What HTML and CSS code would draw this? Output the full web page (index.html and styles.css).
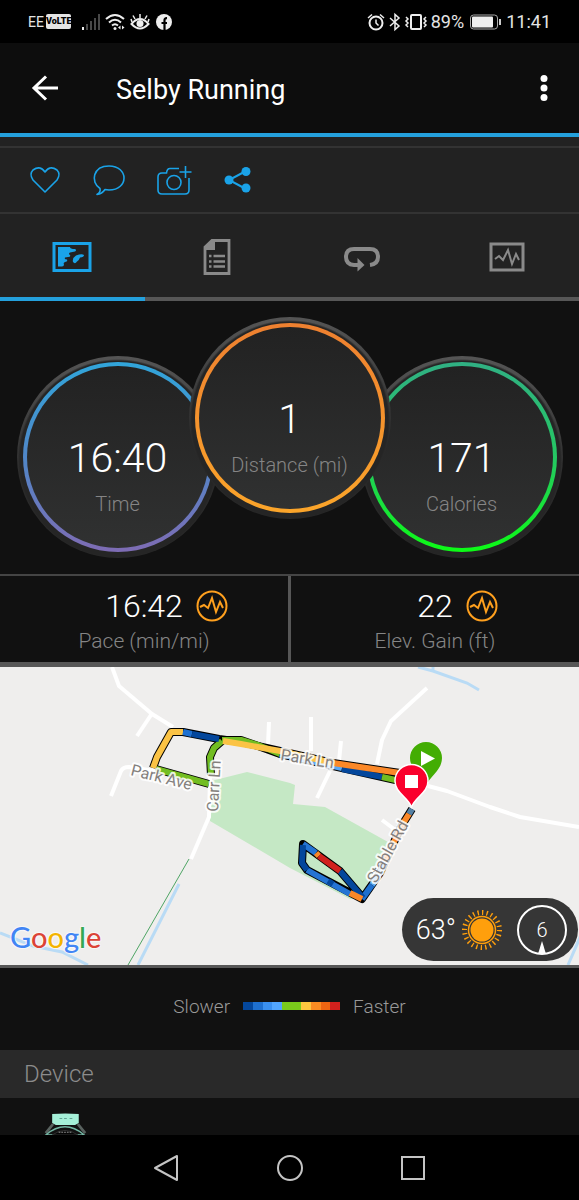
FILE: index.html
```html
<!DOCTYPE html>
<html lang="en">
<head>
    <meta charset="UTF-8">
    <meta name="viewport" content="width=device-width, initial-scale=1">
    <title>Selby Running</title>
    <link rel="stylesheet" href="styles.css">
</head>
<body>
    <div class="status-bar">
        <div class="status-left">
            <span class="carrier">EE</span>
            <span class="volte">VoLTE</span>
            <svg class="signal" width="18" height="18" viewBox="0 0 18 18">
                <path d="M1 14v3" stroke="#eee" stroke-width="2"/>
                <path d="M5 11v6M9 8v9M13 5v12M17 1v16" stroke="#484848" stroke-width="2"/>
            </svg>
            <svg width="20" height="18" viewBox="0 0 20 18" fill="none" stroke="#eee" stroke-width="2">
                <path d="M1 6Q10-2 19 6M4 9.500Q10 4 16 9.500M7 12.500Q10 10 13 12.500"/>
                <circle cx="10" cy="15.500" r="1.500" fill="#eee" stroke="none"/>
                <path d="M15.500 12.500v4l-2.500-2zM17 12.500v4l2.500-2z" fill="#eee" stroke="none"/>
            </svg>
            <svg width="20" height="18" viewBox="0 0 20 18" fill="none" stroke="#eee" stroke-width="2">
                <path d="M1.500 11Q10 1 18.500 11Q10 20 1.500 11z"/>
                <path d="M10 5V1M5 6L3 2.500M15 6l2-3.500M2 9L1 6M18 9l1-3" stroke-width="1.500"/>
                <circle cx="10" cy="10.500" r="3.500" fill="#eee" stroke="none"/>
            </svg>
            <svg width="18" height="18" viewBox="0 0 18 18">
                <circle cx="9" cy="9" r="8" fill="#eee"/>
                <path d="M9.500 17V7q0-2 2.500-1.800M6.500 10h5.500" fill="none" stroke="#000" stroke-width="2.200"/>
            </svg>
        </div>
        <div class="status-right">
            <svg width="18" height="18" viewBox="0 0 18 18" fill="none" stroke="#eee" stroke-width="2">
                <circle cx="9" cy="10" r="6.500"/>
                <path d="M9 6.500V10l2.500 2.500M1 5l4-3.500M17 5l-4-3.500" stroke-width="1.500"/>
            </svg>
            <svg width="12" height="18" viewBox="0 0 12 18" fill="none" stroke="#eee" stroke-width="1.500">
                <path d="M1 5l9 8-4 3.500V1.500L10 5l-9 8"/>
            </svg>
            <svg class="vibrate" width="22" height="18" viewBox="0 0 22 18" fill="none" stroke="#eee" stroke-width="2">
                <rect x="6" y="2" width="10" height="14" rx="1"/>
                <path d="M1 4l2 2-2 2 2 2-2 2 2 2M21 4l-2 2 2 2-2 2 2 2-2 2" stroke-width="1.500"/>
            </svg>
            <span class="battery-text">89%</span>
            <svg class="battery" width="31" height="16" viewBox="0 0 31 16">
                <rect x="0.500" y="1" width="27" height="14" rx="3" fill="none" stroke="#aaa"/>
                <rect x="2" y="2.500" width="21" height="11" rx="1" fill="#eee"/>
                <path d="M30 5v6" stroke="#ccc" stroke-width="2"/>
            </svg>
            <span class="clock">11:41</span>
        </div>
    </div>

    <header class="app-bar">
        <button class="icon-btn" aria-label="Back">
            <svg width="28" height="28" viewBox="0 0 28 28" fill="none" stroke="#fff" stroke-width="3">
                <path d="M27 14H3M15 2.500L3 14l12 11.500"/>
            </svg>
        </button>
        <h1 class="title">Selby Running</h1>
        <button class="icon-btn menu-btn" aria-label="More options">
            <svg width="8" height="28" viewBox="0 0 8 28" fill="#fff">
                <circle cx="4" cy="4.500" r="3.500"/><circle cx="4" cy="14" r="3.500"/><circle cx="4" cy="23.500" r="3.500"/>
            </svg>
        </button>
    </header>

    <div class="actions">
        <button class="icon-btn" aria-label="Like">
            <svg width="34" height="34" viewBox="0 0 34 34" fill="none" stroke="#1aa3e8" stroke-width="1.600">
                <path d="M17 29L5 17Q1 11 5 7Q12 2 17 9Q22 2 29 7Q33 11 29 17z" stroke-linejoin="round"/>
            </svg>
        </button>
        <button class="icon-btn" aria-label="Comment">
            <svg width="34" height="34" viewBox="0 0 34 34" fill="none" stroke="#1aa3e8" stroke-width="1.600">
                <path d="M8 25.500C-2 19 1 3 17 3C37 3 37 27 17 27L13 26.500Q10 31 5 31.500Q9 29 8 25.500z" stroke-linejoin="round"/>
            </svg>
        </button>
        <button class="icon-btn" aria-label="Add photo">
            <svg width="34" height="34" viewBox="0 0 34 34" fill="none" stroke="#1aa3e8" stroke-width="1.600">
                <path d="M23 5.500H14q-3 0-3.500 4.500H6q-4 0-4 4v13q0 4 4 4h23q4 0 4-4V15M29.500 3v12M23.500 9h12"/>
                <circle cx="18" cy="19.500" r="7"/>
            </svg>
        </button>
        <button class="icon-btn" aria-label="Share">
            <svg width="34" height="34" viewBox="0 0 34 34" fill="#1aa3e8">
                <path d="M26 8L9 17l17 9" fill="none" stroke="#1aa3e8" stroke-width="2"/>
                <circle cx="26" cy="8.500" r="4.500"/><circle cx="9" cy="17" r="4.500"/><circle cx="26" cy="25" r="4.500"/>
            </svg>
        </button>
    </div>

    <nav class="tabs">
        <button class="tab active" aria-label="Overview">
            <svg width="40" height="30" viewBox="0 0 40 30" fill="#1aa3e8">
                <rect x="2" y="1.500" width="36" height="27" fill="none" stroke="#1aa3e8" stroke-width="3"/>
                <path d="M6 5h12q0 2 5 2q2 1 0 2.500l-5 1q-2 1 0 2.500q1 2-2 2l-3 .5q-1 2 2 2q1 2-2 2.500q-2 1-1 2.500q0 2-2 2H6z"/>
                <path d="M21 20q-1-4 3-6.500q6-2 8-.5q0 2-4 2.500q-1 3-3 4q-2 3-4 .5z"/>
            </svg>
        </button>
        <button class="tab" aria-label="Stats">
            <svg width="28" height="38" viewBox="0 0 28 38" fill="#8a8a8a">
                <path d="M2 9V35.500H26V2.500H9L2 9z" fill="none" stroke="#8a8a8a" stroke-width="2.800"/>
                <path d="M2 12V9L9 2h3v10z"/>
                <path d="M6 18h2.500M10.500 18H22M6 23.500h2.500M10.500 23.500H22M6 28.500h2.500M10.500 28.500H22" stroke="#8a8a8a" stroke-width="2.500"/>
            </svg>
        </button>
        <button class="tab" aria-label="Laps">
            <svg width="38" height="28" viewBox="0 0 38 28">
                <path d="M15 22h-4Q3 21.500 3 14Q3 6 11 6h16Q35 6 35 14Q35 21 27 22" fill="none" stroke="#8a8a8a" stroke-width="4"/>
                <path d="M14.500 15l7 7-7 6.500z" fill="#8a8a8a"/>
            </svg>
        </button>
        <button class="tab" aria-label="Charts">
            <svg width="36" height="30" viewBox="0 0 36 30" fill="none" stroke="#8a8a8a">
                <rect x="2" y="2" width="32" height="26" stroke-width="3"/>
                <path d="M6 17l4-3 4 4 5-10 4 14 4-10 3 6" stroke-width="2"/>
            </svg>
        </button>
    </nav>

    <section class="dials">
        <div class="dial dial-time">
            <div class="ring">
                <div class="face">
                    <span class="dial-value">16:40</span>
                    <span class="label">Time</span>
                </div>
            </div>
        </div>
        <div class="dial dial-distance">
            <div class="ring">
                <div class="face">
                    <span class="dial-value">1</span>
                    <span class="label">Distance (mi)</span>
                </div>
            </div>
        </div>
        <div class="dial dial-calories">
            <div class="ring">
                <div class="face">
                    <span class="dial-value">171</span>
                    <span class="label">Calories</span>
                </div>
            </div>
        </div>
    </section>

    <section class="stats">
        <div class="stat">
            <div class="stat-row">
                <span class="stat-value">16:42</span>
                <svg class="stat-icon" width="32" height="32" viewBox="0 0 32 32" fill="none" stroke="#ffa01e" stroke-width="2">
                    <circle cx="16" cy="16" r="14.500"/>
                    <path d="M4 17l4-2 4 3 4-10 4 14 4-10 3 6"/>
                </svg>
            </div>
            <span class="label">Pace (min/mi)</span>
        </div>
        <div class="stat">
            <div class="stat-row">
                <span class="stat-value">22</span>
                <svg class="stat-icon" width="32" height="32" viewBox="0 0 32 32" fill="none" stroke="#ffa01e" stroke-width="2">
                    <circle cx="16" cy="16" r="14.500"/>
                    <path d="M4 17l4-2 4 3 4-10 4 14 4-10 3 6"/>
                </svg>
            </div>
            <span class="label">Elev. Gain (ft)</span>
        </div>
    </section>

    <section class="map">
        <svg class="map-canvas" viewBox="0 0 579 298">
            <rect width="579" height="298" fill="#efeeed"/>
            <!-- park -->
            <path d="M211 114L247 105 290 116 295 118 293 137 325 140 388 175 360 232 350 232 290 201 210 154z" fill="#c5e8c5"/>
            <!-- water -->
            <g fill="none" stroke="#b9dbf5" stroke-width="3">
                <path d="M179 217L138 298M0 266L33 279 62 285 88 298M418 0L433 4 467 16 479 23M433 0v5M581 268L568 298"/>
            </g>
            <path d="M189 192L128 298" stroke="#4fa565" stroke-width="1"/>
            <!-- roads -->
            <g fill="none" stroke="#fff" stroke-width="4" stroke-linejoin="round">
                <path d="M112 0L119 19 152 47 173 60M151 48L137 69"/>
                <path d="M111 129L121 104Q123 100 129 100L155 104M210 110L209 150 191 192"/>
                <path d="M269 55L268 78M311 50V84M341 74L339 94M330 104L317 131"/>
                <path d="M427 21L391 54 382 73 377 97M382 153L394 162"/>
                <path d="M428 119L447 124 490 140 520 150 579 160"/>
            </g>
            <!-- route outline -->
            <g fill="none" stroke="#000" stroke-width="8" stroke-linejoin="round">
                <path d="M153 101L157 90 171 65 183 65 219 72 241 75 280 84 333 96 400 106"/>
                <path d="M221 73L241 73 258 79 280 87 342 101 400 114"/>
                <path d="M222 74L214 81 210 90 211 108M156 102L209 117"/>
                <path d="M412 142L402 158 394 175 380 206 362 232 307 203 302 196 303 177 340 204 363 231"/>
            </g>
            <!-- route, coloured by pace -->
            <g fill="none" stroke-width="6" stroke-linejoin="round">
                <path d="M222 73L241 73 258 78 280 87M156 102L209 117M222 74L214 81 210 90 211 108" stroke="#72bd22"/>
                <path d="M280 87L342 101" stroke="#5aa9f5"/>
                <path d="M153 101L157 90 171 65 183 65M223 74L241 77 280 84 333 96" stroke="#fbc345"/>
                <path d="M183 65L192 67" stroke="#1e70d0"/>
                <path d="M192 67L219 72" stroke="#04479c"/>
                <path d="M342 102L382 110" stroke="#04479c"/>
                <path d="M382 110L400 114" stroke="#72bd22"/>
                <path d="M333 96L400 106" stroke="#fb8828"/>
                <path d="M412 142L409 147" stroke="#5581a5"/>
                <path d="M409 147L402 158 394 175 385 194" stroke="#fb8828"/>
                <path d="M385 194L380 206 372 218" stroke="#56a4ef"/>
                <path d="M372 218L362 232" stroke="#1e70d0"/>
                <path d="M307 203L350 227M303 177L316 186" stroke="#2474d4"/>
                <path d="M328 214L333 217" stroke="#04479c"/>
                <path d="M307 203L302 196 303 178M340 204L363 231" stroke="#04479c"/>
                <path d="M350 226L362 232" stroke="#fb8828"/>
                <path d="M316 186L319 189" stroke="#fb8828"/>
                <path d="M319 189L340 204" stroke="#d1211d"/>
            </g>
            <g class="road-names">
                <text transform="translate(130 108) rotate(14)">Park Ave</text>
                <text transform="translate(218 145) rotate(-87)">Carr Ln</text>
                <text transform="translate(280 93) rotate(9)">Park Ln</text>
                <text transform="translate(376 217) rotate(-61)">Stable Rd</text>
            </g>
            <!-- start and finish pins -->
            <path d="M426 119C422 109 410 103 410 91A16 16 0 0 1 442 91C442 103 430 109 426 119z" fill="#43ad03"/>
            <path d="M421 84L435 91.500 421 99z" fill="#fff"/>
            <path d="M411.500 140C407 129 395 126 395 114A16.500 16.500 0 0 1 428 114C428 126 416 129 411.500 140z" fill="#fa002c" stroke="#fff" stroke-width="1.500"/>
            <path d="M405 108h13v13h-13z" fill="#fff"/>
        </svg>
        <div class="google"><span class="g-blue">G</span><span class="g-red">o</span><span class="g-yellow">o</span><span class="g-blue">g</span><span class="g-green">l</span><span class="g-red">e</span></div>
        <div class="weather">
            <span class="temp">63°</span>
            <svg width="42" height="42" viewBox="0 0 42 42" fill="none" stroke="#ff9f0c">
                <circle cx="21" cy="21" r="11.500" fill="#ff9f0c" stroke="none"/>
                <circle cx="21" cy="21" r="13.500" stroke-width="1.500"/>
                <!-- dash pattern gives 24 rays -->
                <circle cx="21" cy="21" r="17.500" stroke-width="5" pathLength="240" stroke-dasharray="3 7"/>
            </svg>
            <div class="wind">
                <span>6</span>
                <svg class="wind-arrow" width="8" height="13" viewBox="0 0 8 13"><path d="M4 0l4 13H0z" fill="#fff"/></svg>
            </div>
        </div>
    </section>

    <section class="legend">
        <span>Slower</span>
        <div class="legend-bar">
            <i class="pace-1"></i><i class="pace-2"></i><i class="pace-3"></i><i class="pace-4"></i><i class="pace-5"></i><i class="pace-5"></i><i class="pace-6"></i><i class="pace-7"></i><i class="pace-8"></i><i class="pace-9"></i>
        </div>
        <span>Faster</span>
    </section>

    <h2 class="section-title">Device</h2>
    <div class="device">
        <svg width="48" height="24" viewBox="0 0 48 24">
            <path d="M10 1q14-1 29 0v10l-4 2H14l-4-2z" fill="#a5f0d8"/>
            <path d="M18 6h3M23 6h3M29 6h3" stroke="#5c9c8c" stroke-width="1"/>
            <path d="M11 12L3 22M38 12l8 10" stroke="#59625f" stroke-width="3"/>
            <path d="M3 24Q24 6 45 24z" fill="#111" stroke="#73b5a3" stroke-width="1.500"/>
            <path d="M10 24Q24 14 38 24z" fill="#050505" stroke="#333"/>
            <path d="M17 21h14" stroke="#999" stroke-dasharray="2 1"/>
        </svg>
    </div>

    <footer class="system-nav">
        <button class="icon-btn" aria-label="Back">
            <svg width="28" height="28" viewBox="0 0 28 28" fill="none" stroke="#c4c4c4" stroke-width="2" stroke-linejoin="round"><path d="M24 2v24L2 14z"/></svg>
        </button>
        <button class="icon-btn" aria-label="Home">
            <svg width="28" height="28" viewBox="0 0 28 28" fill="none" stroke="#c4c4c4" stroke-width="2"><circle cx="14" cy="14" r="12"/></svg>
        </button>
        <button class="icon-btn" aria-label="Recent apps">
            <svg width="28" height="28" viewBox="0 0 28 28" fill="none" stroke="#c4c4c4" stroke-width="2"><rect x="3" y="3" width="22" height="22"/></svg>
        </button>
    </footer>
</body>
</html>
```

FILE: styles.css
```css
* {
    margin: 0;
    padding: 0;
    box-sizing: border-box;
}

body {
    min-height: 100vh;
    display: flex;
    flex-direction: column;
    background: #111;
    color: #fff;
    font-family: Roboto, sans-serif;
    font-weight: 300;
    overflow-x: hidden;
}

svg {
    display: block;
    flex-shrink: 0;
    overflow: visible;
}

button {
    background: none;
    border: none;
    color: inherit;
    cursor: pointer;
}

/* Status bar */
.status-bar {
    display: flex;
    justify-content: space-between;
    align-items: center;
    height: 43px;
    padding: 0 28px;
    background: #000;
    color: #e4e4e4;
    font-size: 18px;
    font-weight: 400;
}

.status-left {
    display: flex;
    align-items: center;
    gap: 5px;
}

.status-right {
    display: flex;
    align-items: center;
    gap: 4px;
}

.carrier {
    font-size: 14px;
}

.volte {
    margin: 0 6px 0 -3px;
    border-radius: 2px;
    background: #e4e4e4;
    color: #000;
    font-size: 9px;
    font-weight: 900;
    line-height: 15px;
}

.battery {
    margin: 0 1px 0 2px;
}

/* App bar */
.app-bar {
    display: flex;
    align-items: center;
    height: 94px;
    padding: 0 31px;
    background: #0d0d0d;
    border-bottom: 4px solid #24a0dc;
}

.title {
    flex: 1;
    margin-left: 57px;
    padding-top: 4px;
    font-size: 27px;
    font-weight: 400;
}

/* Like, comment, photo, share */
.actions {
    display: flex;
    gap: 30px;
    padding: 15px 28px;
    margin-top: 9px;
    border-top: 2px solid #333;
    border-bottom: 2px solid #333;
    background: #222;
    box-shadow: 0 -9px 0 #222;
}

/* Tabs */
.tabs {
    display: flex;
    background: #222;
}

.tab {
    flex: 1;
    display: flex;
    justify-content: center;
    align-items: center;
    height: 87px;
    padding-top: 2px;
    border-bottom: 4px solid #575757;
}

.tab.active {
    border-color: #24a0dc;
}

/* Dials */
.dials {
    display: flex;
    justify-content: center;
    align-items: flex-end;
    padding: 16px 0;
}

.dial {
    width: 202px;
    height: 202px;
    padding: 6px;
    border-radius: 50%;
    background: radial-gradient(circle at 50% 51%, #252525 98px, transparent 100px), linear-gradient(#555, #2b2b2b 60%);
}

.dial-distance {
    z-index: 1;
    margin: 0 -30px 39px;
}

.ring {
    height: 100%;
    padding: 4px;
    border-radius: 50%;
}

.dial-time .ring {
    background: linear-gradient(#31a5da, #5087c8 50%, #7e6cb4);
}

.dial-distance .ring {
    background: linear-gradient(#ee8030, #fba52a);
}

.dial-calories .ring {
    background: linear-gradient(#30b083, #25c763 50%, #0cfb15);
}

.face {
    display: flex;
    flex-direction: column;
    align-items: center;
    height: 100%;
    padding-top: 66px;
    border-radius: 50%;
    background: linear-gradient(#222, #303131);
}

.dial-value {
    font-size: 41px;
    line-height: 52px;
}

.label {
    color: #858585;
    font-size: 20px;
    line-height: 24px;
}

.dial .label {
    margin-top: 8px;
}

/* Pace and elevation */
.stats {
    display: flex;
    border-top: 2px solid #454545;
    border-bottom: 5px solid #575757;
}

.stat {
    flex: 1;
    padding: 10px 0 6px;
    text-align: center;
}

.stat + .stat {
    border-left: 3px solid #575757;
}

.stat-row {
    display: grid;
    grid-template-columns: 1fr auto 1fr;
    align-items: center;
    height: 40px;
}

.stat-value {
    grid-column: 2;
    font-size: 32px;
}

.stat-icon {
    margin-left: 13px;
}

.stat .label {
    display: block;
    font-size: 21px;
    line-height: 30px;
}

/* Map */
.map {
    position: relative;
    border-bottom: 3px solid #575757;
}

.map-canvas {
    width: 100%;
    overflow: hidden;
}

.road-names {
    fill: #84807d;
    stroke: rgba(255, 255, 255, 0.85);
    stroke-width: 4px;
    stroke-linejoin: round;
    paint-order: stroke;
    font-size: 16px;
    font-weight: 400;
}

.google {
    position: absolute;
    left: 10px;
    bottom: 10px;
    font-family: Lato, sans-serif;
    font-size: 29px;
    font-weight: 500;
    line-height: 36px;
    text-shadow: 0 0 2px #fff, 0 0 2px #fff, 0 0 2px #fff;
}

.g-blue { color: #4285f4; }
.g-red { color: #db4437; }
.g-yellow { color: #f4b400; }
.g-green { color: #34a853; }

.weather {
    position: absolute;
    right: 1px;
    bottom: 4px;
    display: flex;
    align-items: center;
    gap: 5px;
    height: 63px;
    padding: 0 11px 0 14px;
    border-radius: 32px;
    background: #363636;
}

.temp {
    font-size: 27px;
}

.wind {
    position: relative;
    width: 50px;
    height: 50px;
    margin-left: 9px;
    border: 2px solid #fff;
    border-radius: 50%;
    font-size: 20px;
    line-height: 46px;
    text-align: center;
}

.wind-arrow {
    position: absolute;
    left: 19px;
    bottom: -1px;
}

/* Pace legend */
.legend {
    display: flex;
    justify-content: center;
    align-items: center;
    gap: 13px;
    height: 82px;
    padding-bottom: 6px;
    color: #999;
    font-size: 19px;
}

.legend-bar {
    display: flex;
    width: 97px;
    height: 8px;
}

.legend-bar i {
    flex: 1;
}

.pace-1 { background: #04479c; }
.pace-2 { background: #1e70d0; }
.pace-3 { background: #3a90f0; }
.pace-4 { background: #52a6ff; }
.pace-5 { background: #7acb1b; }
.pace-6 { background: #fdc63f; }
.pace-7 { background: #fb8c22; }
.pace-8 { background: #ee6512; }
.pace-9 { background: #d1211d; }

/* Device */
.section-title {
    padding: 0 24px;
    background: #292929;
    color: #8c8c8c;
    font-size: 24px;
    font-weight: 300;
    line-height: 48px;
}

.device {
    flex: 1;
    min-height: 37px;
    padding: 15px 41px 0;
    overflow: hidden;
}

.device svg {
    height: 22px;
}

/* System navigation */
.system-nav {
    display: flex;
    justify-content: center;
    align-items: center;
    gap: 95px;
    height: 65px;
    background: #000;
}
```
